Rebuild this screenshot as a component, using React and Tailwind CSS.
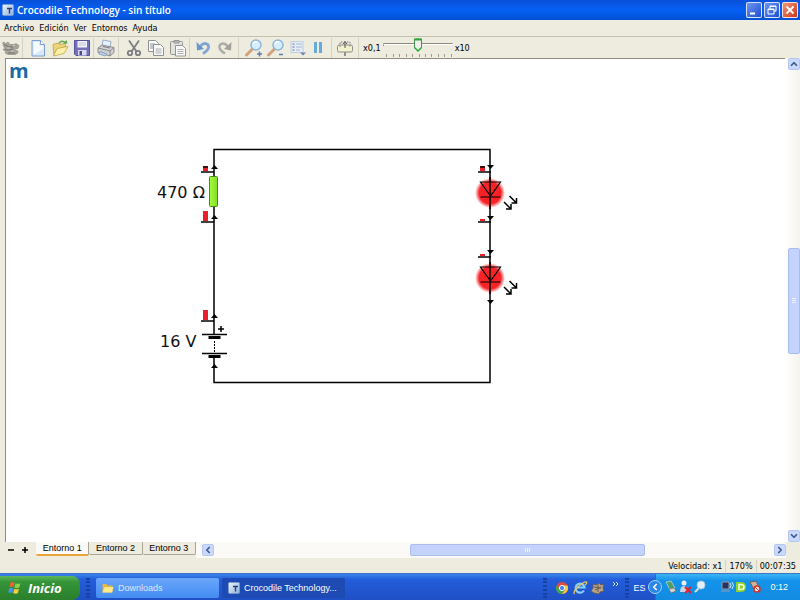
import React, { useState } from 'react';
import { ChevronUp, ChevronDown, ChevronLeft, ChevronRight } from 'lucide-react';

const MENUS = ['Archivo', 'Edición', 'Ver', 'Entornos', 'Ayuda'];
const TABS = ['Entorno 1', 'Entorno 2', 'Entorno 3'];

const AppIcon = () => (
  <svg viewBox="0 0 12 12" className="h-3 w-3 shrink-0" aria-hidden="true">
    <defs>
      <linearGradient id="appFill" x1="0" y1="0" x2="1" y2="1">
        <stop offset="0" stopColor="#eef4fb" />
        <stop offset="1" stopColor="#8fb0dc" />
      </linearGradient>
    </defs>
    <rect x="0.5" y="0.5" width="11" height="11" rx="1" fill="url(#appFill)" stroke="#7d9fd0" strokeWidth="0.6" />
    <path d="M5 4.5h5M7.5 4.5v5" stroke="#1e3f80" strokeWidth="1.4" />
  </svg>
);

/* Toolbar drawings, all on an 18px grid */
const ICONS = {
  home: (
    <g>
      <path d="M1 3l3 1.500L6 3l2 2.500h4l2-1 3 2-1 3-5 1 5 1.500v1.500L14 15.500H6L3 14l1-2-3-1 1.500-2L1 6z" fill="#a4a39c" stroke="#8b8a83" strokeWidth="0.6" />
      <path d="M2 5.500l5 2.500h4M3 10.500l4 .5 4-1M6 14h7" fill="none" stroke="#75746d" />
      <path d="M5 9h3M9 12h3M11 6.500h2" stroke="#cfcdc4" />
    </g>
  ),
  newFile: (
    <g>
      <path d="M3 1.5h8.5l4 4v11.5H3z" fill="#d9e9fb" stroke="#7ba0d0" />
      <path d="M4.5 3H10v3.5h4.5v3L5 15.5z" fill="#f5faff" />
      <path d="M11.5 1.5v4h4" fill="#fff" stroke="#7ba0d0" />
    </g>
  ),
  open: (
    <g>
      <path d="M2 5.5l5-1.5 1.5 1.5 6-1v3l-9 3-2.5 6.5z" fill="#efd777" stroke="#bda046" strokeWidth="0.8" />
      <path d="M2.5 17L6 9.5l11-2-4 7z" fill="#fcf0a8" stroke="#c3a850" strokeWidth="0.8" />
      <path d="M8 4.5c1.5-3 4.500-3 6-.5" fill="none" stroke="#5eaa4c" strokeWidth="1.5" />
      <path d="M12 4.5h4.500l-1-3.500z" fill="#5eaa4c" />
    </g>
  ),
  save: (
    <g>
      <path d="M1.500 1.500h15v15H3l-1.500-1.500z" fill="#7471ba" stroke="#55529b" />
      <path d="M4.500 2h9.500v6.500h-9.500z" fill="#f2f2fb" />
      <path d="M5.500 4h7.500M5.500 6h7.500" stroke="#b9b8da" strokeWidth="0.8" />
      <path d="M5 11h8.500v5.500H5z" fill="#d9d9ef" />
      <path d="M6.500 12h2.500v4H6.500z" fill="#4b488a" />
    </g>
  ),
  print: (
    <g strokeWidth="0.8">
      <path d="M6 1l8 1.500-1 6-8-1z" fill="#e5f0fc" stroke="#829ebf" />
      <path d="M1 9l4-3 12 2.500v5l-4 3.500L1 13.500z" fill="#d0d1d3" stroke="#777a80" />
      <path d="M1 9l12 3 4-3.500M13 12v5" fill="none" stroke="#777a80" />
      <path d="M3 12.500l7 2.500-2 2-6-2z" fill="#b8d2ee" stroke="#7f97b5" />
      <path d="M6 7.500l7 1.500" stroke="#65676c" />
    </g>
  ),
  cut: (
    <g fill="none" stroke="#7d7e82" strokeWidth="1.800">
      <path d="M4 1.500l7.500 11M14 1.500l-7.500 11" />
      <circle cx="5" cy="14" r="2.200" />
      <circle cx="13" cy="14" r="2.200" />
    </g>
  ),
  copy: (
    <g fill="#fafafa" stroke="#8e9093">
      <path d="M1.500 1.500h7l3 3v8h-10z" />
      <path d="M3 5h5M3 7h5M3 9h5" />
      <path d="M6.500 5.500h7l3 3v8h-10z" />
      <path d="M8.500 10h6M8.500 12h6M8.500 14h6" stroke="#a9abad" />
    </g>
  ),
  paste: (
    <g fill="#e3e2dc" stroke="#949592">
      <rect x="1.500" y="2.500" width="12" height="13" rx="1" />
      <path d="M5 1.500h5v2.500H5z" fill="#bbb" />
      <path d="M6.500 6.500h7l3 3v7.500h-10z" fill="#fafafa" />
      <path d="M8.500 10.500h6M8.500 12.500h6M8.500 14.500h6" stroke="#a9abad" />
    </g>
  ),
  undo: (
    <g>
      <path d="M6 7.500c4-5 9-3 8.500 1-.5 3-3 4.500-5.500 6" fill="none" stroke="#7fa5d2" strokeWidth="2.800" />
      <path d="M2.500 3l.5 8.500 7-1.500z" fill="#6797cc" />
    </g>
  ),
  redo: (
    <g>
      <path d="M12 7.500c-4-5-9-3-8.500 1 .5 3 3 4.500 5.500 6" fill="none" stroke="#acaca7" strokeWidth="2.400" />
      <path d="M15.500 3l-.5 8.500-7-1.500z" fill="#a2a29d" />
    </g>
  ),
  zoomIn: (
    <g>
      <path d="M1.500 16l6-6" stroke="#d3a17a" strokeWidth="3" strokeLinecap="round" />
      <circle cx="11" cy="6" r="5" fill="#d5efff" stroke="#8fb7d8" strokeWidth="1.500" />
      <path d="M8 5q1-3 4-2" fill="none" stroke="#fff" strokeWidth="1.500" />
      <path d="M12 15h5M14.500 12.500v5" stroke="#5f7bb4" strokeWidth="1.500" />
    </g>
  ),
  zoomOut: (
    <g>
      <path d="M1.500 16l6-6" stroke="#d3a17a" strokeWidth="3" strokeLinecap="round" />
      <circle cx="11" cy="6" r="5" fill="#d5efff" stroke="#8fb7d8" strokeWidth="1.500" />
      <path d="M8 5q1-3 4-2" fill="none" stroke="#fff" strokeWidth="1.500" />
      <path d="M12 15.500h4" stroke="#5f7bb4" strokeWidth="1.500" />
    </g>
  ),
  list: (
    <g>
      <rect x="2" y="2.500" width="12" height="11" fill="#e6edf7" stroke="#c3cedf" />
      <path d="M3.500 5h2M3.500 8h2M3.500 11h2" stroke="#8299bf" strokeWidth="1.500" />
      <path d="M7 5h6M7 8h6M7 11h4" stroke="#a5b6d1" />
      <path d="M11 13.500h6l-3 3z" fill="#6d86b5" />
    </g>
  ),
  pause: <path d="M3 3h3v11H3zM8 3h3v11h-3z" fill="#65aadb" />,
  probe: (
    <g>
      <path d="M9 12v5" stroke="#77776f" strokeWidth="1.500" />
      <rect x="1.500" y="6" width="15" height="7" rx="1.500" fill="#f1f2cf" stroke="#8f8f82" />
      <path d="M4 8V3h10v5" fill="none" stroke="#777" strokeDasharray="1.500 1.500" />
      <path d="M9 9V3.500M7 5l2-2.500L11 5" fill="none" stroke="#555" />
    </g>
  ),
};

const ToolButton = ({ icon, label }) => (
  <button type="button" aria-label={label} className="flex h-5 w-[22px] shrink-0 items-center justify-center">
    <svg viewBox="0 0 18 18" className="h-[18px] w-[18px]">{ICONS[icon]}</svg>
  </button>
);

const Divider = () => <span className="h-5 w-px shrink-0 bg-[#d5d2c4]" />;

const Toolbar = () => {
  const [speed, setSpeed] = useState(5);

  return (
    <div className="flex h-[22px] items-center border-t border-[#c4c1b1]">
      <ToolButton icon="home" label="Inicio" />
      <Divider />
      <div className="flex pl-1">
        <ToolButton icon="newFile" label="Nuevo" />
        <ToolButton icon="open" label="Abrir" />
        <ToolButton icon="save" label="Guardar" />
      </div>
      <Divider />
      <div className="flex px-px">
        <ToolButton icon="print" label="Imprimir" />
      </div>
      <Divider />
      <div className="flex pl-1">
        <ToolButton icon="cut" label="Cortar" />
        <ToolButton icon="copy" label="Copiar" />
        <ToolButton icon="paste" label="Pegar" />
      </div>
      <Divider />
      <div className="flex px-0.5">
        <ToolButton icon="undo" label="Deshacer" />
        <ToolButton icon="redo" label="Rehacer" />
      </div>
      <Divider />
      <div className="flex pl-1">
        <ToolButton icon="zoomIn" label="Acercar" />
        <ToolButton icon="zoomOut" label="Alejar" />
        <ToolButton icon="list" label="Lista" />
        <ToolButton icon="pause" label="Pausa" />
      </div>
      <Divider />
      <div className="flex px-0.5">
        <ToolButton icon="probe" label="Sonda" />
      </div>
      <Divider />
      <label htmlFor="speed" className="pl-1">x0,1</label>
      <div className="relative ml-0.5 h-5 w-[70px]">
        <svg viewBox="0 0 70 20" className="h-5 w-full" aria-hidden="true">
          <path d="M0.500 8V5.500h69" fill="none" stroke="#8d8a7c" />
          <path d="M0.500 6.500h69" stroke="#fff" />
          <path d="M3.500 16v3M10.500 16v3M16.500 16v3M23.500 16v3M29.500 16v3M36.500 16v3M42.500 16v3M48.500 16v3M55.500 16v3M61.500 16v3M68.500 16v3" stroke="#9d9a8d" />
        </svg>
        <input
          id="speed"
          type="range"
          min="0"
          max="10"
          value={speed}
          onChange={(e) => setSpeed(Number(e.target.value))}
          className="absolute inset-0 h-full w-full opacity-0"
        />
        <svg
          viewBox="0 0 9 14"
          className="pointer-events-none absolute top-0 h-3.5 w-[9px] -translate-x-1/2"
          style={{ left: `${speed * 10}%` }}
          aria-hidden="true"
        >
          <path d="M1 1h7v8.500L4.500 13 1 9.500z" fill="#f1f1ec" stroke="#4c8a55" />
          <path d="M1 1.500h7" stroke="#25ad35" strokeWidth="2" />
          <path d="M1 9.500L4.500 13 8 9.500" fill="none" stroke="#25ad35" strokeWidth="1.500" />
        </svg>
      </div>
      <span className="pl-0.5">x10</span>
    </div>
  );
};

const Arrow = ({ x, y, down }) => (
  <path d={down ? `M${x - 3} ${y}h7l-3.500 4z` : `M${x - 3} ${y + 4}h7l-3.500-4z`} fill="#000" />
);

/* Voltage bar beside a terminal */
const Gauge = ({ x, y, level, capped }) => (
  <g>
    <rect x={x} y={y - level} width="5" height={level} fill="#e8202a" />
    {capped && <rect x={x} y={y - level} width="5" height="2" fill="#401010" />}
    <path d={`M${x - 2} ${y + 1}h13`} stroke="#000" strokeWidth="1.500" />
  </g>
);

const Led = ({ y }) => (
  <g stroke="#000" strokeWidth="1.500" fill="none">
    <circle cx="490" cy={y} r="15" fill="url(#glow)" stroke="none" />
    <path d={`M490 ${y - 16}v32`} />
    <path d={`M480.500 ${y - 11}h20L490.500 ${y + 3}zM480.500 ${y + 4}h20`} strokeWidth="1.200" />
    <path d={`M504 ${y + 9}l7 7M511 ${y + 11}v5h-5M509.500 ${y + 3}l7 7M516.500 ${y + 5}v5h-5`} />
  </g>
);

const Circuit = () => (
  <svg viewBox="150 140 380 250" className="absolute top-[81px] left-36 h-[250px] w-[380px]" role="img">
    <defs>
      <radialGradient id="glow">
        <stop offset="0.720" stopColor="#f92226" />
        <stop offset="1" stopColor="#f92226" stopOpacity="0" />
      </radialGradient>
      <linearGradient id="resistor">
        <stop offset="0" stopColor="#a0ff3a" />
        <stop offset="1" stopColor="#84dc28" />
      </linearGradient>
    </defs>

    <path d="M214 334V149.500H490V382.500H214V355" fill="none" stroke="#000" strokeWidth="1.500" />
    <rect x="209.500" y="176.500" width="8" height="30" rx="1" fill="url(#resistor)" stroke="#4d8616" />

    {/* Battery */}
    <path d="M202 334.500h25M202 353.500h25" stroke="#000" strokeWidth="1.500" />
    <path d="M208.500 337.500h12M208.500 356.500h12" stroke="#000" strokeWidth="3" />
    <path d="M214.500 341v11" stroke="#000" strokeDasharray="2 1" />
    <path d="M218 329h6M221 326v6" stroke="#000" strokeWidth="1.500" />

    <Gauge x={203} y={171} level={5} capped />
    <Gauge x={203} y={221} level={10} />
    <Gauge x={203} y={320} level={10} />
    <Gauge x={480} y={171} level={5} capped />
    <Gauge x={480} y={221} level={2} />
    <Gauge x={480} y={256} level={2} />

    <Arrow x={214} y={165} />
    <Arrow x={214} y={215} />
    <Arrow x={214} y={314} />
    <Arrow x={214} y={364} />
    <Arrow x={490} y={165} down />
    <Arrow x={490} y={216} down />
    <Arrow x={490} y={250} down />
    <Arrow x={490} y={300} down />

    <Led y={193} />
    <Led y={278} />

    <g fontFamily="'DejaVu Sans', sans-serif" fontSize="16" fill="#111">
      <text x="157" y="198">470 Ω</text>
      <text x="160" y="347">16 V</text>
    </g>
  </svg>
);

const ScrollButton = ({ label, children }) => (
  <button
    type="button"
    aria-label={label}
    className="flex h-3 w-3 shrink-0 items-center justify-center rounded-xs border border-[#b3c7f3] bg-[#c9d8fc] text-[#3f5788]"
  >
    {children}
  </button>
);

const WindowButton = ({ label, close, children }) => (
  <button
    type="button"
    aria-label={label}
    className={`h-4 w-4 rounded-xs border border-white/80 ${close ? 'bg-linear-to-br from-[#ee9377] to-[#cc3512]' : 'bg-linear-to-br from-[#6d95f4] to-[#1d4ed0]'}`}
  >
    <svg viewBox="0 0 14 14" className="h-3.5 w-3.5" fill="none" stroke="#fff">{children}</svg>
  </button>
);

const Flag = () => (
  <svg viewBox="0 0 14 14" className="h-3.5 w-3.5" aria-hidden="true">
    <path d="M2.500 1.500q2-1 4 .2L5.500 6q-2-1-4-.2z" fill="#f2622e" />
    <path d="M7.500 2.200q2 1 5 0l-1.200 4.300q-2.500 1-4.800 0z" fill="#8bd14a" />
    <path d="M1.200 7.200q2-.8 4 .2L4.200 12q-2-1-4-.2z" fill="#4c8ff0" />
    <path d="M6.200 7.800q2.500 1 4.800 0l-1.200 4.500q-2.500 1-4.600-.2z" fill="#f8cf3a" />
  </svg>
);

const QuickLaunch = () => (
  <svg viewBox="0 0 70 16" className="h-4 w-[70px] shrink-0" aria-hidden="true">
    <circle cx="7" cy="8" r="6" fill="#e34b36" />
    <path d="M1.500 5.500A6 6 0 0 0 7 14l3-5-5 1z" fill="#3ca94b" />
    <path d="M7 14a6 6 0 0 0 5.500-8.500H7L10 10z" fill="#f7cd39" />
    <circle cx="7" cy="8" r="2.600" fill="#3e84ea" stroke="#fff" />
    <path d="M29 10.500a4.500 4.500 0 1 1 .6-3H22" fill="none" stroke="#85cdfb" strokeWidth="2.200" />
    <path d="M19.500 14q-2-2 4-7.500t8-4.500q1 1-1.500 3" fill="none" stroke="#e9c954" strokeWidth="1.200" />
    <path d="M38 4l3 1 3-2 2 2 3-1-1 4 1 3-4 1-1 2-5-1-3-2 2-3z" fill="#b7a28b" stroke="#625853" strokeWidth="0.800" />
    <path d="M39 7l7 1M40 10l6-3M43 4v8" stroke="#6b5a4c" />
    <path d="M58 2l2 2-2 2M61 2l2 2-2 2" fill="none" stroke="#cfe0ff" />
  </svg>
);

const TrayIcons = () => (
  <svg viewBox="0 0 98 16" className="h-4 w-[98px] shrink-0" aria-hidden="true">
    <path d="M2 3l5-1 4 7-5 2z" fill="#4f9e68" stroke="#dde9dc" strokeWidth="0.600" />
    <path d="M5 10l5-1 2 3-5 2z" fill="#d7d6cf" stroke="#666" strokeWidth="0.600" />
    <circle cx="20" cy="4" r="2.500" fill="#e9eef5" />
    <path d="M16 13q0-6 4-6t4 6z" fill="#c8d4e4" />
    <path d="M21 8l6 6M27 8l-6 6" stroke="#e51f2c" strokeWidth="2" />
    <path d="M31 13l4-4" stroke="#dedede" strokeWidth="2" />
    <circle cx="37" cy="6" r="4" fill="#e1f1ff" stroke="#b0c7e0" />
    <path d="M58 3h7v7h-7zM57 12h9" fill="#26355f" stroke="#929eb0" />
    <path d="M66 4q2 2 0 5M68 3q3 3 0 7" fill="none" stroke="#d1e6f3" />
    <path d="M72 3h5q5 0 5 5t-5 5h-5z" fill="#8bd130" />
    <path d="M75 5.500h2q3 0 3 2.500t-3 2.500h-2z" fill="none" stroke="#f3ffda" strokeWidth="1.500" />
    <path d="M86 3l6-1 3 6-5 3z" fill="#c9b39f" stroke="#685d56" />
    <circle cx="93" cy="10" r="3" fill="#eee" stroke="#d93127" strokeWidth="1.500" />
    <path d="M91 8l4 4" stroke="#d93127" />
  </svg>
);

const Grip = () => <span className="h-5 w-1 shrink-0 border-x-2 border-dotted border-[#1742a5]" />;

export default function App() {
  const [tab, setTab] = useState(0);

  return (
    <div className="flex h-screen flex-col bg-[#eeebdf] font-['DejaVu_Sans_Condensed','DejaVu_Sans',sans-serif] text-[9px] leading-3 text-black">
      {/* Title bar */}
      <header className="flex h-5 shrink-0 items-center gap-[3px] bg-linear-to-b from-[#0a50d8] via-[#0560f5] to-[#0250d4] pr-0.5 pl-0.5 text-white">
        <AppIcon />
        <h1 className="flex-1 font-['Open_Sans',sans-serif] text-[10px] font-semibold">Crocodile Technology - sin título</h1>
        <div className="flex gap-0.5">
          <WindowButton label="Minimizar"><path d="M3 10.500h5" strokeWidth="2" /></WindowButton>
          <WindowButton label="Restaurar"><path d="M5 5.500V3h6v5H9M3 6h6v5H3zM3 6.500h6M5 3.500h6" /></WindowButton>
          <WindowButton label="Cerrar" close><path d="M3.500 3.500l7 7M10.500 3.500l-7 7" strokeWidth="1.800" /></WindowButton>
        </div>
      </header>

      <nav className="flex h-4 shrink-0 items-center gap-[5px] pl-1">
        {MENUS.map((name) => (
          <button key={name} type="button">{name}</button>
        ))}
      </nav>

      <Toolbar />

      {/* Work area */}
      <div className="flex min-h-0 flex-1">
        <main className="relative ml-[5px] flex-1 overflow-hidden border-t border-l border-[#8f8d80] bg-white">
          <span className="block pt-0.5 pl-[3px] font-['Open_Sans',sans-serif] text-[20px] leading-5 font-bold text-[#1968a8]">m</span>
          <Circuit />
        </main>
        <div className="flex w-[15px] flex-col items-center bg-linear-to-r from-white to-[#f5f3ed] pl-0.5">
          <ScrollButton label="Subir"><ChevronUp className="h-2.5 w-2.5" strokeWidth={4} /></ScrollButton>
          <div className="flex w-3 flex-1 flex-col">
            <span className="flex-[180]" />
            <span className="flex flex-[104] flex-col items-center justify-center gap-px rounded-xs border border-[#aabdec] bg-[#c3d3fd]">
              <i className="h-px w-1 bg-[#eef3ff]" />
              <i className="h-px w-1 bg-[#eef3ff]" />
              <i className="h-px w-1 bg-[#eef3ff]" />
            </span>
            <span className="flex-[178]" />
          </div>
          <ScrollButton label="Bajar"><ChevronDown className="h-2.5 w-2.5" strokeWidth={4} /></ScrollButton>
        </div>
      </div>

      <div className="flex h-4 shrink-0 items-center">
        <div className="flex w-9 justify-center gap-1.5">
          <button type="button" aria-label="Quitar entorno">
            <svg viewBox="0 0 8 8" className="h-2 w-2"><path d="M1 4h6" stroke="#000" strokeWidth="1.500" /></svg>
          </button>
          <button type="button" aria-label="Añadir entorno">
            <svg viewBox="0 0 8 8" className="h-2 w-2"><path d="M1 4h6M4 1v6" stroke="#000" strokeWidth="1.500" /></svg>
          </button>
        </div>
        <div className="flex h-full w-40 items-start">
          {TABS.map((name, i) => (
            <button
              key={name}
              type="button"
              onClick={() => setTab(i)}
              className={`flex-1 rounded-b-xs border-r font-['Liberation_Sans',sans-serif] ${i === tab ? 'border-r-[#a8a596] border-b-2 border-b-[#eaa43a] bg-[#fbfaf6]' : 'border-b border-[#a8a596]'}`}
            >
              {name}
            </button>
          ))}
        </div>
        <div className="flex flex-1 items-center bg-[#fbfaf6] py-0.5 pl-1.5">
          <ScrollButton label="Izquierda"><ChevronLeft className="h-2.5 w-2.5" strokeWidth={4} /></ScrollButton>
          <div className="flex h-3 flex-1">
            <span className="flex-[197]" />
            <span className="flex flex-[234] items-center justify-center gap-px rounded-xs border border-[#aabdec] bg-[#c3d3fd]">
              <i className="h-1 w-px bg-[#eef3ff]" />
              <i className="h-1 w-px bg-[#eef3ff]" />
              <i className="h-1 w-px bg-[#eef3ff]" />
            </span>
            <span className="flex-[129]" />
          </div>
          <ScrollButton label="Derecha"><ChevronRight className="h-2.5 w-2.5" strokeWidth={4} /></ScrollButton>
        </div>
        <span className="w-3.5" />
      </div>

      <div className="flex h-[15px] shrink-0 items-center justify-end gap-[3px] pr-1">
        <span>Velocidad: x1</span>
        <span className="border-l border-[#d6d2c2] pl-[3px]">170%</span>
        <span className="border-l border-[#d6d2c2] pl-[3px]">00:07:35</span>
      </div>

      {/* Taskbar */}
      <footer className="flex h-[27px] shrink-0 items-end border-t border-[#3d74c5] bg-linear-to-b from-[#3b85ea] via-[#245edb] via-20% to-[#1f4fc4] font-['Liberation_Sans',sans-serif] whitespace-nowrap text-white">
        <button
          type="button"
          className="flex h-6 w-20 shrink-0 items-center gap-1.5 rounded-r-lg bg-linear-to-b from-[#5eb85c] via-[#359438] via-25% to-[#2a7f2c] pl-2 font-['Open_Sans',sans-serif] text-[13px] leading-4 font-bold italic"
        >
          <Flag />
          Inicio
        </button>
        <div className="flex h-6 items-center px-1.5"><Grip /></div>
        <div className="flex h-6 min-w-0 flex-1 gap-[3px] py-0.5">
          <button type="button" className="flex w-[123px] items-center gap-1 rounded-xs bg-linear-to-b from-[#6aa6fa] to-[#438cf2] pl-1.5 text-[#dce9ff]">
            <svg viewBox="0 0 12 12" className="h-3 w-3">
              <path d="M0.500 2h4l1 1.500h5V10.500h-10z" fill="#e9b83e" />
              <path d="M0.500 10.500l2-5.500h9l-1.500 5.500z" fill="#fce88d" />
            </svg>
            Downloads
          </button>
          <button type="button" className="flex w-[123px] items-center gap-1 rounded-xs bg-[#1d4bb3] pl-1.5">
            <AppIcon />
            Crocodile Technology...
          </button>
        </div>
        <div className="flex h-6 items-center">
          <Grip />
          <span className="w-2" />
          <QuickLaunch />
          <Grip />
          <span className="pr-2.5 pl-1">ES</span>
        </div>
        <div className="relative flex h-[26px] items-center border-l border-[#1b6fc9] bg-linear-to-b from-[#3bb4f5] via-[#1493ea] via-25% to-[#128be2] pr-3 pl-2">
          <button type="button" aria-label="Mostrar iconos" className="absolute top-1.5 -left-2 flex h-3.5 w-3.5 items-center justify-center rounded-full border border-[#9fd8fb] bg-[#2a86e8]">
            <ChevronLeft className="h-2.5 w-2.5" strokeWidth={4} />
          </button>
          <TrayIcons />
          <time className="pl-2">0:12</time>
        </div>
      </footer>
    </div>
  );
}
